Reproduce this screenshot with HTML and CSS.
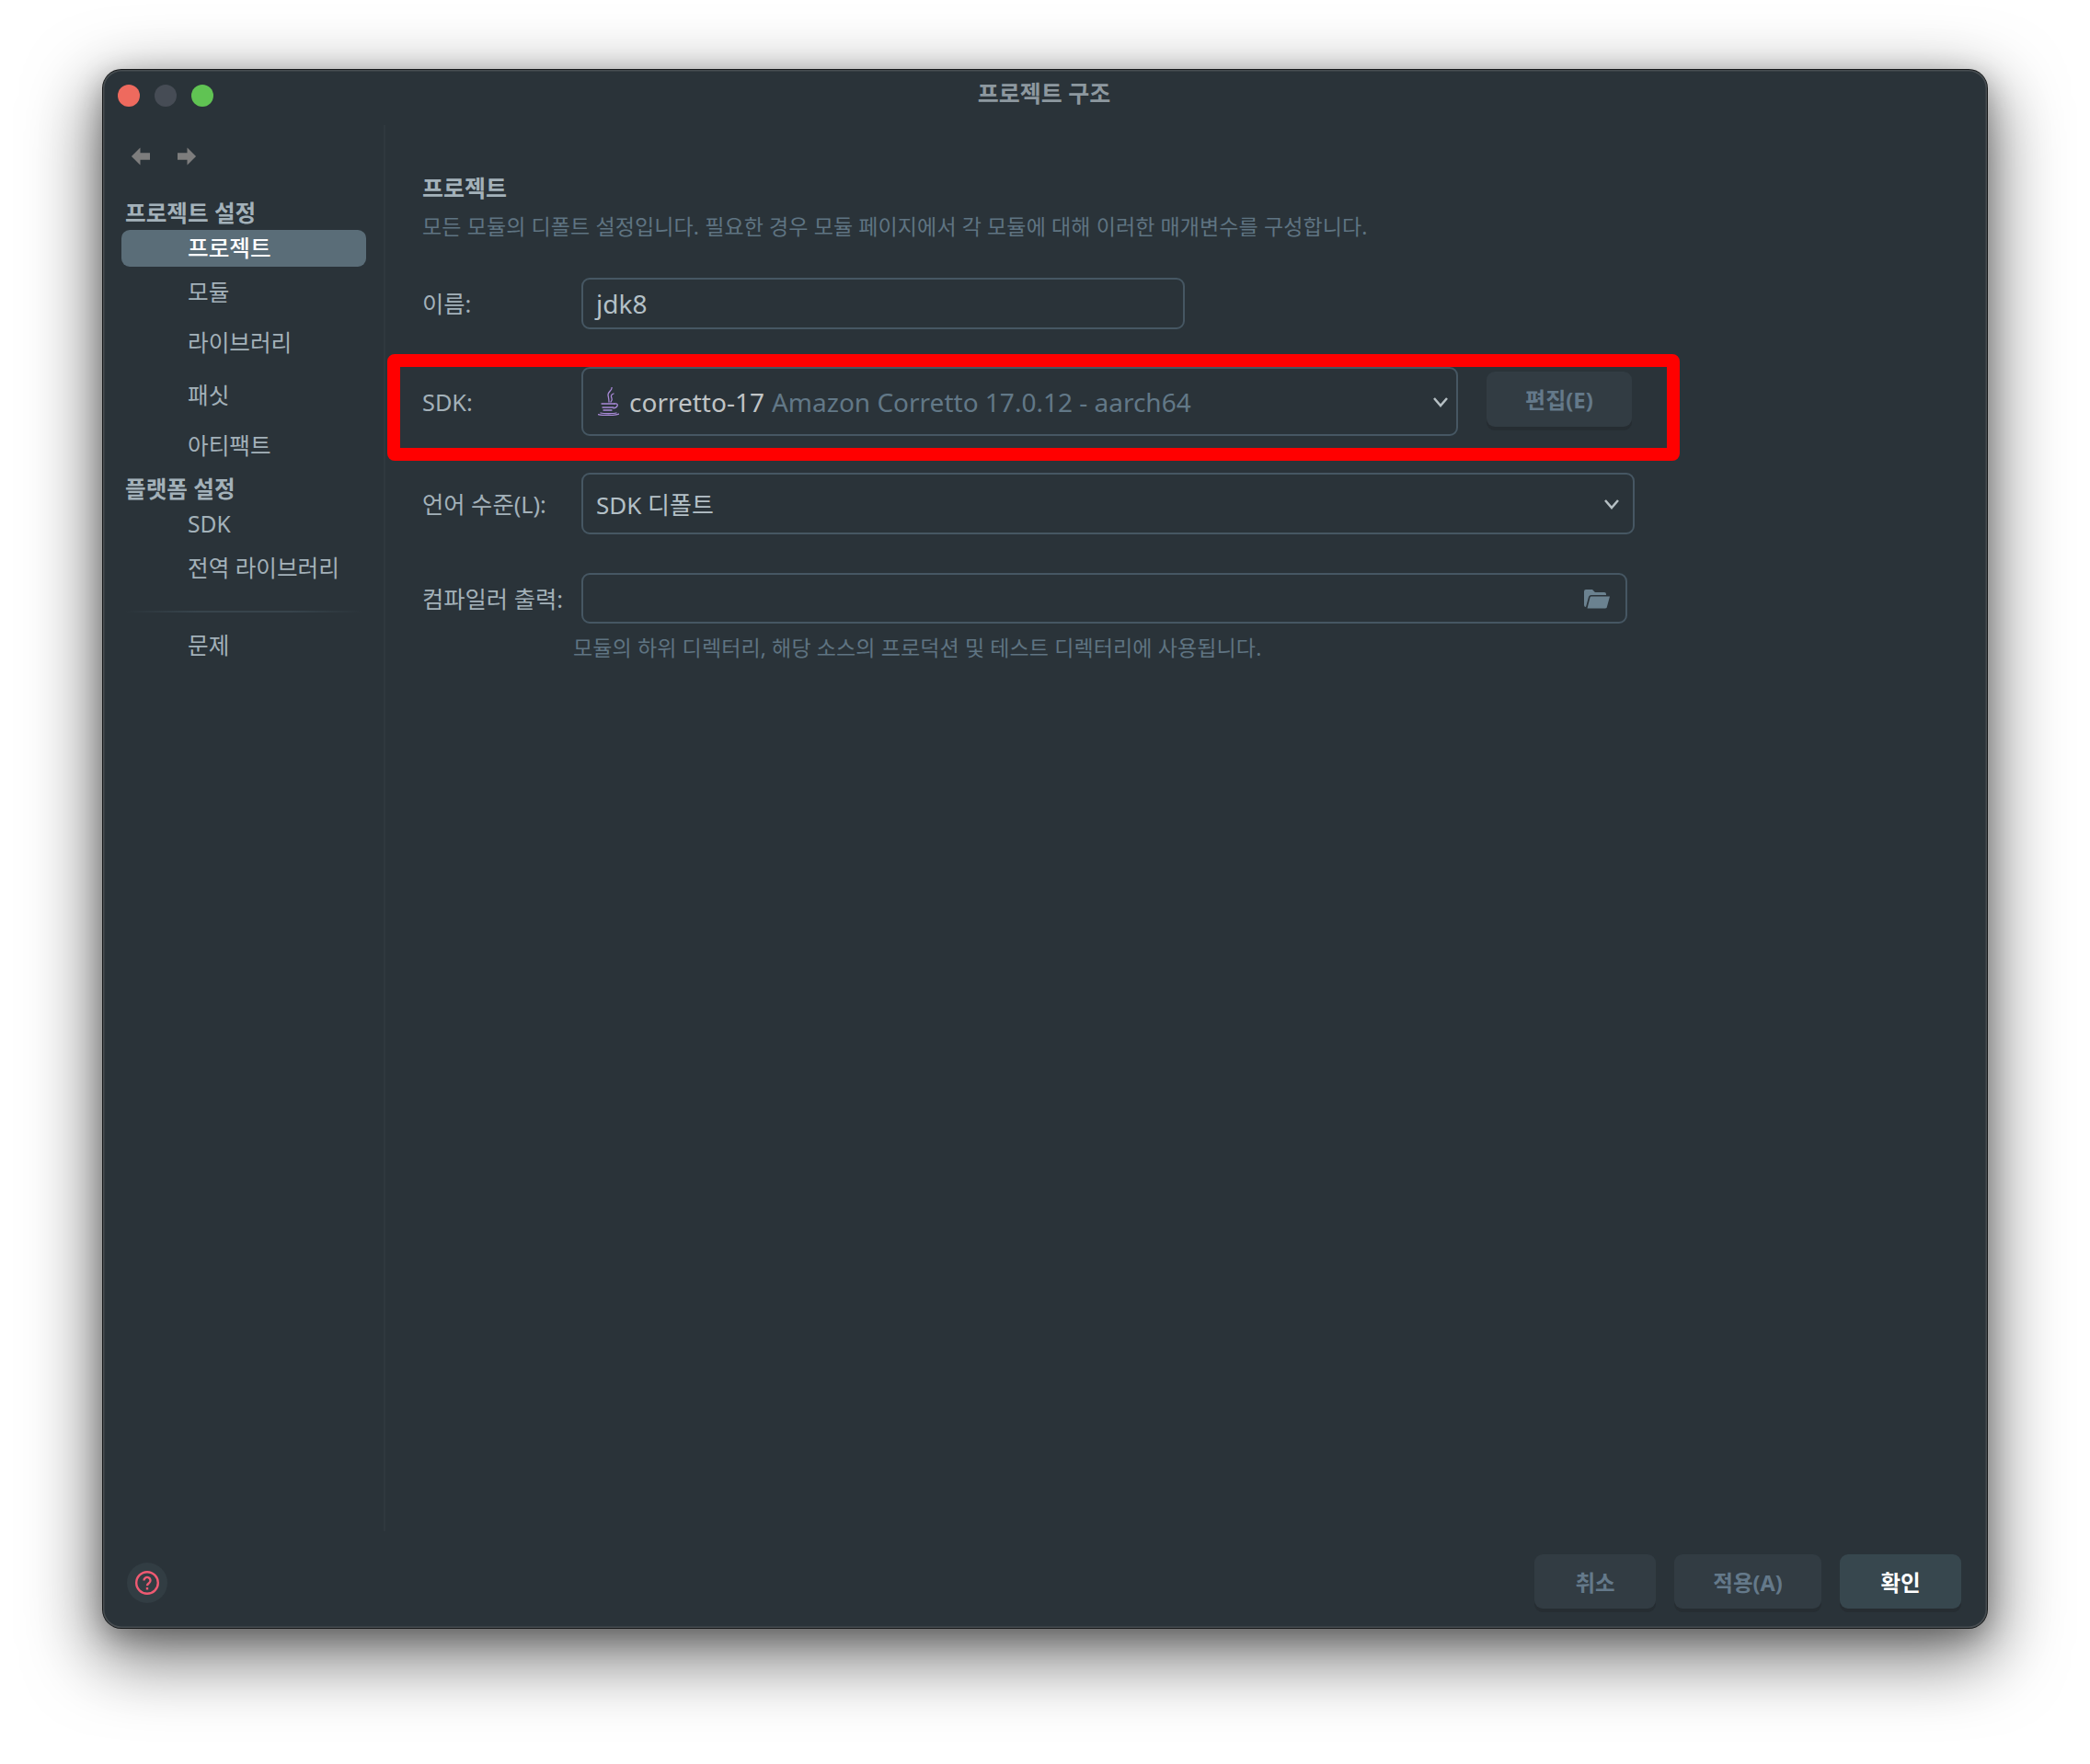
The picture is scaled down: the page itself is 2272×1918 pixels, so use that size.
FILE: index.html
```html
<!DOCTYPE html>
<html lang="ko">
<head>
<meta charset="utf-8">
<title>프로젝트 구조</title>
<link rel="stylesheet" href="styles.css">
</head>
<body>
<div class="window">
  <header class="titlebar">
    <div class="lights"><span class="light red"></span><span class="light gray"></span><span class="light green"></span></div>
    <div class="title">프로젝트 구조</div>
  </header>
  <div class="content">
    <aside class="sidebar">
      <div class="arrows">
        <svg class="arrow" viewBox="0 0 22 20"><path d="M1 10 11 0V6H22V14H11V20Z"/></svg>
        <svg class="arrow" viewBox="0 0 22 20"><path d="M21 10 11 0V6H0V14H11V20Z"/></svg>
      </div>
      <nav class="nav">
        <div class="group">프로젝트 설정</div>
        <div class="item selected">프로젝트</div>
        <div class="item">모듈</div>
        <div class="item">라이브러리</div>
        <div class="item">패싯</div>
        <div class="item">아티팩트</div>
        <div class="group">플랫폼 설정</div>
        <div class="item">SDK</div>
        <div class="item">전역 라이브러리</div>
        <div class="sep"></div>
        <div class="item">문제</div>
      </nav>
    </aside>
    <main class="main">
      <h1 class="heading">프로젝트</h1>
      <p class="desc">모든 모듈의 디폴트 설정입니다. 필요한 경우 모듈 페이지에서 각 모듈에 대해 이러한 매개변수를 구성합니다.</p>
      <div class="row row-name">
        <label class="label">이름:</label>
        <div class="field field-name">jdk8</div>
      </div>
      <div class="row row-sdk">
        <label class="label">SDK:</label>
        <div class="field field-sdk">
          <svg class="java" viewBox="0 0 23 31" fill="none" stroke="#a98ad8" stroke-width="1.300" stroke-linecap="round">
            <path d="M15 0c1 3-4 5-4 8 0 2 1 4 1 8"/>
            <path d="M17 7c-3 1-3 3-2 5 .6 1.500 0 3-1 4"/>
            <path d="M4 18h14M5 22h12M6 25h9"/>
            <path d="M18 18c4-1 5 3-1 5"/>
            <path d="M3 28c3 1 14 1 17 0M0 29.500c5 1.500 18 1.500 23-.5"/>
          </svg>
          <span class="sdk-name">corretto-17</span>
          <span class="sdk-detail">Amazon Corretto 17.0.12 - aarch64</span>
          <svg class="chev" viewBox="0 0 18 12"><path d="M2 2l7 8 7-8"/></svg>
        </div>
        <button class="btn btn-edit" type="button">편집(E)</button>
      </div>
      <div class="row row-lang">
        <label class="label">언어 수준(L):</label>
        <div class="field field-lang">
          <span>SDK 디폴트</span>
          <svg class="chev" viewBox="0 0 18 12"><path d="M2 2l7 8 7-8"/></svg>
        </div>
      </div>
      <div class="row row-out">
        <label class="label">컴파일러 출력:</label>
        <div class="field field-out">
          <svg class="folder" viewBox="0 0 28 22"><path d="M0 3a2 2 0 0 1 2-2h7l3 3h10a2 2 0 0 1 2 2v1H8a3 3 0 0 0-3 2L2 20a2 2 0 0 1-2-2Z"/><path d="M8 8.500h20l-3 11a2 2 0 0 1-2 2H3.500l3-12a1.500 1.500 0 0 1 1.500-1Z"/></svg>
        </div>
      </div>
      <p class="hint">모듈의 하위 디렉터리, 해당 소스의 프로덕션 및 테스트 디렉터리에 사용됩니다.</p>
      <div class="highlight"></div>
    </main>
  </div>
  <footer class="footer">
    <div class="help">
      <svg viewBox="0 0 26 26" fill="none" stroke="#ef5a72" stroke-width="2.400"><circle cx="13" cy="13" r="11.800"/><path d="M9.500 10.500a3.500 3.500 0 1 1 5.500 2.800c-1.300.9-2 1.500-2 3"/><path d="M13 18v2.500"/></svg>
    </div>
    <div class="actions">
      <button class="btn btn-cancel" type="button">취소</button>
      <button class="btn btn-apply" type="button">적용(A)</button>
      <button class="btn btn-ok" type="button">확인</button>
    </div>
  </footer>
</div>
</body>
</html>
```
FILE: styles.css
```css
* { box-sizing: border-box; }
html, body { margin: 0; height: 1918px; }
body {
  width: 2272px;
  overflow: hidden;
  background: #fff;
  padding: 76px 112px 0 112px;
  font-family: "Noto Sans", "Noto Sans CJK KR", sans-serif;
  font-size: 24.6px;
  color: #a9b7bf;
}
.window {
  width: 2048px;
  height: 1694px;
  background: #2a3339;
  border-radius: 20px;
  display: flex;
  flex-direction: column;
  box-shadow: 0 0 0 1px #17191a, inset 0 0 0 1.500px #474d51, 0 26px 76px 8px rgba(0,0,0,.55), 0 8px 30px rgba(0,0,0,.28);
}
.titlebar {
  height: 60px;
  flex: none;
  position: relative;
  padding: 16px 0 0 16px;
}
.lights { display: flex; gap: 16px; }
.light { width: 24px; height: 24px; border-radius: 50%; }
.light.red { background: #ee6a5e; }
.light.gray { background: #464c55; }
.light.green { background: #60c353; }
.title {
  position: absolute;
  left: 0; right: 0; top: 8px;
  padding-right: 2px;
  text-align: center;
  font-size: 25px;
  font-weight: 700;
  line-height: 34px;
  color: #8d989f;
}
.content { flex: 1; display: flex; min-height: 0; }
.sidebar { width: 307px; flex: none; border-right: 2px solid #2f383e; }
.arrows { display: flex; gap: 30px; padding: 24px 0 0 30px; height: 78px; }
.arrow { width: 21px; height: 20px; fill: #7d7d7d; }
.nav {
  display: grid;
  padding: 0 19px 0 20px;
  grid-template-rows: 36px 40px 55px 56px 57px 54px 40px 36px 60px 34px 40px;
  align-items: center;
}
.group { padding-left: 4px; font-weight: 700; color: #a3b1b9; line-height: 36px; }
.item { padding-left: 72px; line-height: 42px; color: #a3b1b9; }
.item.selected { background: #5a6d78; border-radius: 9px; color: #fff; font-weight: 500; height: 40px; line-height: 40px; }
.sep { height: 2px; margin: 0 4px; background: linear-gradient(90deg, #2a3339, #37444c 30%, #37444c 70%, #2a3339); }
.main { flex: 1; position: relative; padding: 51px 0 0 40px; }
.heading { margin: 0; font-size: 25px; font-weight: 700; line-height: 34px; color: #a3b1b9; }
.desc { margin: 9px 0 0; font-size: 23px; letter-spacing: .11px; line-height: 32px; color: #5f7482; }
.row { display: flex; align-items: center; }
.label { width: 173px; flex: none; color: #a3b1b9; line-height: 34px; font-size: 25.300px; }
.field {
  display: flex;
  align-items: center;
  border: 2px solid #465763;
  border-radius: 9px;
  color: #b4c0c7;
  padding: 0 14px;
  flex: none;
}
.row-name { margin-top: 40px; }
.field-name { width: 656px; height: 56px; font-size: 28px; }
.row-sdk { margin-top: 41px; }
.field-sdk { width: 953px; height: 75px; padding: 0 8px 0 16px; font-size: 28px; }
.java { width: 23px; height: 31px; margin-right: 11px; flex: none; }
.sdk-name { color: #c0c4c6; }
.sdk-detail { margin-left: 8px; color: #627887; }
.chev { width: 18px; height: 12px; margin-left: auto; fill: none; stroke: #b6c0c4; stroke-width: 2.500; flex: none; }
.btn {
  border: 0;
  font: inherit;
  font-size: 24px;
  font-weight: 700;
  border-radius: 9px;
  background: #323c43;
  color: #64798a;
  box-shadow: 0 4px 0 #262d32;
  padding: 0;
}
.btn-edit { width: 158px; height: 60px; margin-left: 31px; margin-top: -6px; }
.row-lang { margin-top: 40px; }
.field-lang { width: 1145px; height: 67px; font-size: 26px; }
.row-out { margin-top: 42px; }
.field-out { width: 1137px; height: 55px; }
.folder { width: 28px; height: 22px; margin-left: auto; margin-right: 3px; fill: #6b8290; }
.hint { margin: 10px 0 0 164px; font-size: 23px; letter-spacing: .12px; line-height: 32px; color: #5f7482; }
.highlight {
  position: absolute;
  left: 2px; top: 249px;
  width: 1405px; height: 116px;
  border: 14px solid #ff0000;
  border-radius: 8px;
  pointer-events: none;
}
.footer {
  flex: none;
  height: 105px;
  display: flex;
  justify-content: space-between;
  padding: 0 28px 0 26px;
}
.help {
  width: 44px; height: 44px;
  margin-top: 34px;
  border-radius: 50%;
  background: #323d43;
  display: flex;
  align-items: center;
  justify-content: center;
}
.help svg { width: 26px; height: 26px; }
.actions { display: flex; gap: 20px; padding-top: 25px; }
.actions .btn { height: 59px; font-size: 23.500px; }
.btn-cancel { width: 132px; }
.btn-apply { width: 160px; }
.btn-ok { width: 132px; background: #37474e; color: #fff; }
```
